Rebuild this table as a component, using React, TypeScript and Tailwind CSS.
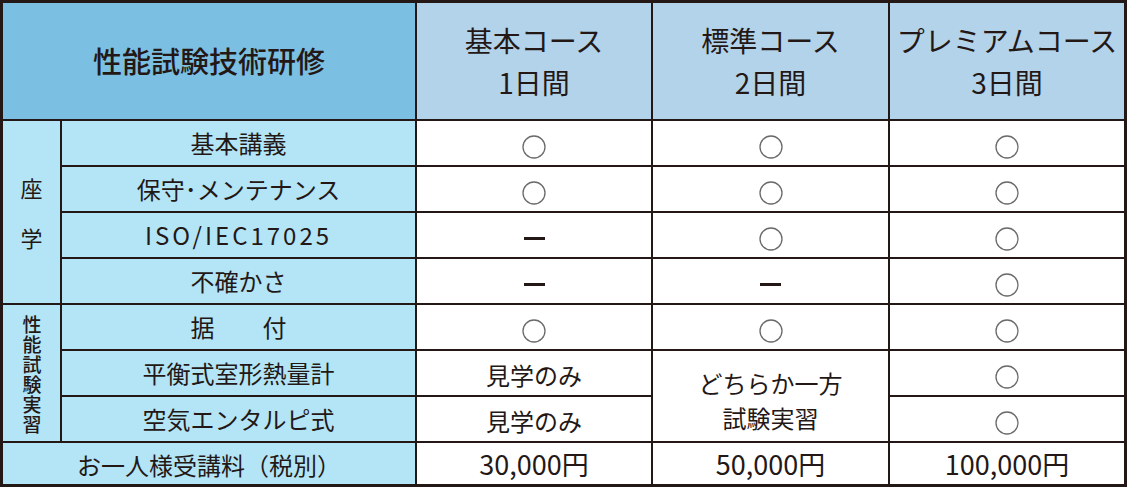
import React from 'react'

const ink = 'text-[#231815]'
const font = { fontFamily: '"Noto Sans CJK JP", "Noto Sans", sans-serif' }

function Circle() {
  return (
    <svg width="24" height="24" viewBox="0 0 24 24" className="mt-[7px]">
      <circle cx="12" cy="12" r="11" fill="none" stroke="#6b6a6a" strokeWidth="1.3" />
    </svg>
  )
}

function Dash() {
  return <div className="mt-[6px] h-[3px] w-[21px] bg-[#231815]" />
}

const label = `flex items-center justify-center bg-[#b3e5f7] text-[24px] ${ink}`
const cell = `flex items-center justify-center bg-white text-[24px] ${ink}`

const rows: { name: React.ReactNode; vals: ('o' | '-')[] }[] = [
  { name: '基本講義', vals: ['o', 'o', 'o'] },
  { name: '保守･メンテナンス', vals: ['o', 'o', 'o'] },
  { name: <span className="tracking-[3px]">ISO/IEC17025</span>, vals: ['-', 'o', 'o'] },
  { name: '不確かさ', vals: ['-', '-', 'o'] },
]

function Mark({ v }: { v: 'o' | '-' }) {
  return v === 'o' ? <Circle /> : <Dash />
}

export default function App() {
  return (
    <div className="h-[489px] w-[1127px] bg-white" style={font}>
      <div className="grid grid-cols-[57px_353px_234px_235px_234px] grid-rows-[116px_repeat(7,44px)_41px] gap-[2px] border-[3px] border-[#231815] bg-[#231815]">
        {/* header */}
        <div className={`col-span-2 flex items-center justify-center bg-[#7bbfe2] text-[29px] font-medium ${ink}`}>
          性能試験技術研修
        </div>
        {[
          ['基本コース', '1日間'],
          ['標準コース', '2日間'],
          ['プレミアムコース', '3日間'],
        ].map(([a, b]) => (
          <div key={a} className={`flex flex-col items-center justify-center bg-[#b3d3ea] text-[28px] leading-[42px] ${ink}`}>
            <span>{a}</span>
            <span>{b}</span>
          </div>
        ))}

        {/* 座学 */}
        <div className={`row-span-4 flex flex-col items-center justify-center gap-[26px] bg-[#b3e5f7] text-[22px] leading-[24px] ${ink}`}>
          <span>座</span>
          <span>学</span>
        </div>
        {rows.map((r, i) => (
          <React.Fragment key={i}>
            <div className={label}>{r.name}</div>
            {r.vals.map((v, j) => (
              <div key={j} className={cell}>
                <Mark v={v} />
              </div>
            ))}
          </React.Fragment>
        ))}

        {/* 性能試験実習 */}
        <div className={`row-span-3 flex items-center justify-center bg-[#b3e5f7] pt-[4px] ${ink}`}>
          <span className="text-[19px] leading-[24px] font-medium tracking-[1px] [text-orientation:upright] [writing-mode:vertical-rl]">
            性能試験実習
          </span>
        </div>
        <div className={label}>
          <span>据　　付</span>
        </div>
        <div className={cell}><Circle /></div>
        <div className={cell}><Circle /></div>
        <div className={cell}><Circle /></div>

        <div className={label}>平衡式室形熱量計</div>
        <div className={`${cell} pt-[4px]`}>見学のみ</div>
        <div className={`${cell} row-span-2 flex-col pt-[8px] leading-[35px]`}>
          <span>どちらか一方</span>
          <span>試験実習</span>
        </div>
        <div className={cell}><Circle /></div>

        <div className={label}>空気エンタルピ式</div>
        <div className={`${cell} pt-[4px]`}>見学のみ</div>
        <div className={cell}><Circle /></div>

        {/* price */}
        <div className={`${label} col-span-2 pt-[2px]`}>お一人様受講料（税別）</div>
        <div className={`${cell} pt-[2px] text-[27px]`}>30,000円</div>
        <div className={`${cell} pt-[2px] text-[27px]`}>50,000円</div>
        <div className={`${cell} pt-[2px] text-[27px]`}>100,000円</div>
      </div>
    </div>
  )
}
